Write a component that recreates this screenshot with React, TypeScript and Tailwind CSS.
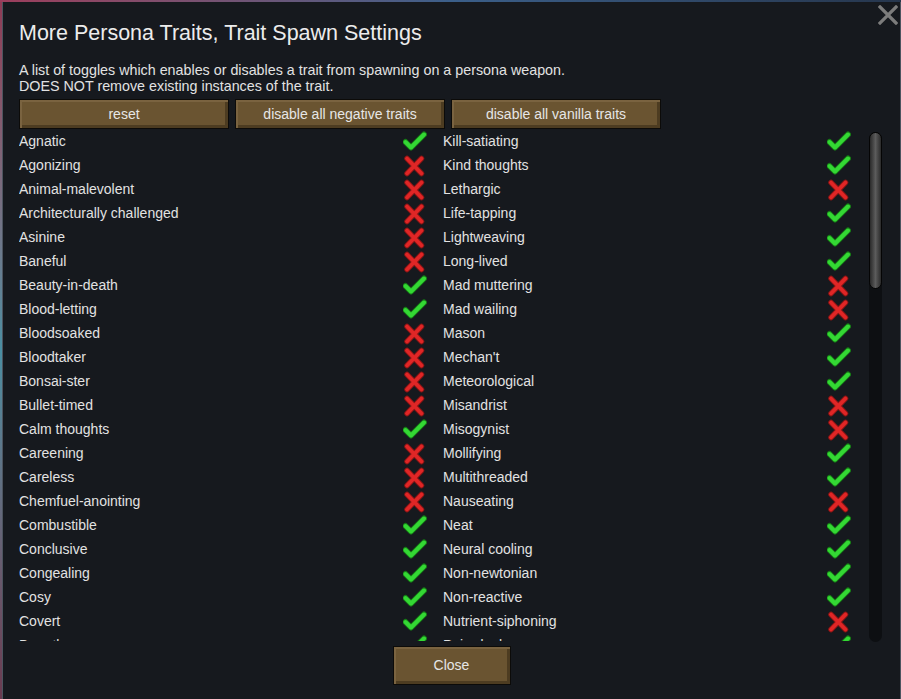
import React from 'react';

type Trait = { name: string; on: boolean };

const leftTraits: Trait[] = [
    { name: 'Agnatic', on: true },
    { name: 'Agonizing', on: false },
    { name: 'Animal-malevolent', on: false },
    { name: 'Architecturally challenged', on: false },
    { name: 'Asinine', on: false },
    { name: 'Baneful', on: false },
    { name: 'Beauty-in-death', on: true },
    { name: 'Blood-letting', on: true },
    { name: 'Bloodsoaked', on: false },
    { name: 'Bloodtaker', on: false },
    { name: 'Bonsai-ster', on: false },
    { name: 'Bullet-timed', on: false },
    { name: 'Calm thoughts', on: true },
    { name: 'Careening', on: false },
    { name: 'Careless', on: false },
    { name: 'Chemfuel-anointing', on: false },
    { name: 'Combustible', on: true },
    { name: 'Conclusive', on: true },
    { name: 'Congealing', on: true },
    { name: 'Cosy', on: true },
    { name: 'Covert', on: true },
    { name: 'Dauntless', on: true },
];

const rightTraits: Trait[] = [
    { name: 'Kill-satiating', on: true },
    { name: 'Kind thoughts', on: true },
    { name: 'Lethargic', on: false },
    { name: 'Life-tapping', on: true },
    { name: 'Lightweaving', on: true },
    { name: 'Long-lived', on: true },
    { name: 'Mad muttering', on: false },
    { name: 'Mad wailing', on: false },
    { name: 'Mason', on: true },
    { name: "Mechan't", on: true },
    { name: 'Meteorological', on: true },
    { name: 'Misandrist', on: false },
    { name: 'Misogynist', on: false },
    { name: 'Mollifying', on: true },
    { name: 'Multithreaded', on: true },
    { name: 'Nauseating', on: false },
    { name: 'Neat', on: true },
    { name: 'Neural cooling', on: true },
    { name: 'Non-newtonian', on: true },
    { name: 'Non-reactive', on: true },
    { name: 'Nutrient-siphoning', on: false },
    { name: 'Pain-dealer', on: true },
];

function CheckIcon() {
    return (
        <svg width="24" height="24" viewBox="0 0 24 24" className="shrink-0">
            <path d="M2.5 13 L8 18.5 L21 5.5" fill="none" stroke="#167a16" strokeWidth="6" strokeLinecap="round" strokeLinejoin="round" />
            <path d="M2.5 13 L8 18.5 L21 5.5" fill="none" stroke="#34d834" strokeWidth="4" strokeLinecap="round" strokeLinejoin="round" />
        </svg>
    );
}

function CrossIcon() {
    return (
        <svg width="24" height="24" viewBox="0 0 24 24" className="shrink-0">
            <path d="M4 5.5 L18.5 20.5 M18.5 5.5 L4 20.5" fill="none" stroke="#8a1515" strokeWidth="5.5" strokeLinecap="round" />
            <path d="M4 5.5 L18.5 20.5 M18.5 5.5 L4 20.5" fill="none" stroke="#e02626" strokeWidth="3.8" strokeLinecap="round" />
        </svg>
    );
}

function TraitRow({ trait }: { trait: Trait }) {
    return (
        <div className="flex h-6 items-center justify-between">
            <span className="text-[14px] leading-6 text-[#e2e2e2]">{trait.name}</span>
            {trait.on ? <CheckIcon /> : <CrossIcon />}
        </div>
    );
}

function BrownButton({ label, className }: { label: string; className: string }) {
    return (
        <button
            className={`flex items-center justify-center border border-[#0c0b09] bg-[#6a5431] text-[#e6e6e6] shadow-[inset_2px_2px_0_#7a6340,inset_-3px_-3px_0_#4d3c21] ${className}`}
        >
            {label}
        </button>
    );
}

export default function App() {
    return (
        <div
            className="flex h-[699px] w-[901px] flex-col overflow-hidden bg-[#16191e]"
            style={{ fontFamily: '"Liberation Sans", Arial, sans-serif' }}
        >
            {/* strip of the game screen peeking above the window */}
            <div className="h-[2px] shrink-0 bg-linear-to-r from-[#9c3d5c] via-[#3b5f8a] to-[#26364d]" />

            <div className="flex flex-1">
                <div className="w-[2px] shrink-0 bg-linear-to-b from-[#8f3a55] via-[#4a8fa3] to-[#6a3a50]" />

                {/* Window */}
                <div className="relative flex flex-1 flex-col border-x border-[#4d5560] bg-[#16191e] px-4">
                    {/* Close X */}
                    <button className="absolute right-[2px] top-[3px] p-0">
                        <svg width="20" height="20" viewBox="0 0 20 20">
                            <path d="M2 2 L18 18 M18 2 L2 18" stroke="#7c7c7c" strokeWidth="3.2" strokeLinecap="square" />
                        </svg>
                    </button>

                    <h1 className="pt-[19px] text-[21.5px] leading-6 text-[#ececec]">
                        More Persona Traits, Trait Spawn Settings
                    </h1>

                    <p className="mt-[17px] text-[14.3px] leading-4 text-[#e2e2e2]">
                        A list of toggles which enables or disables a trait from spawning on a persona weapon.
                        <br />
                        DOES NOT remove existing instances of the trait.
                    </p>

                    <div className="mt-[5px] flex gap-[6px]">
                        <BrownButton label="reset" className="h-[30px] w-[210px] text-[14px]" />
                        <BrownButton label="disable all negative traits" className="h-[30px] w-[210px] text-[14px]" />
                        <BrownButton label="disable all vanilla traits" className="h-[30px] w-[210px] text-[14px]" />
                    </div>

                    {/* List + scrollbar */}
                    <div className="flex h-[512px]">
                        <div className="grid h-full w-[832px] grid-cols-2 gap-x-4 overflow-hidden">
                            <div className="flex flex-col">
                                {leftTraits.map((t) => (
                                    <TraitRow key={t.name} trait={t} />
                                ))}
                            </div>
                            <div className="flex flex-col">
                                {rightTraits.map((t) => (
                                    <TraitRow key={t.name} trait={t} />
                                ))}
                            </div>
                        </div>

                        <div className="ml-[18px] mt-[3px] flex h-[510px] w-[13px] flex-col rounded-full bg-[#0d0f12]">
                            <div className="h-[157px] rounded-full border border-[#050505] bg-linear-to-r from-[#2b2b2b] via-[#5c5c5c] to-[#2b2b2b]" />
                        </div>
                    </div>

                    <div className="mt-[5px] flex justify-center">
                        <BrownButton label="Close" className="h-[39px] w-[118px] text-[14px]" />
                    </div>
                </div>
            </div>
        </div>
    );
}
